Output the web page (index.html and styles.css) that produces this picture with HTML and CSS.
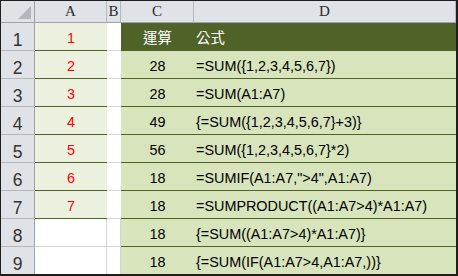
FILE: index.html
```html
<!DOCTYPE html>
<html>
<head>
<meta charset="utf-8">
<link rel="stylesheet" href="styles.css">
</head>
<body>
<div class="sheet">
  <div class="ch corner"><span class="tri"></span></div>
  <div class="ch">A</div>
  <div class="ch">B</div>
  <div class="ch">C</div>
  <div class="ch last">D</div>

  <div class="rh">1</div>
  <div class="a">1</div>
  <div class="b"></div>
  <div class="c head">運算</div>
  <div class="d head">公式</div>

  <div class="rh">2</div>
  <div class="a">2</div>
  <div class="b"></div>
  <div class="c">28</div>
  <div class="d">=SUM({1,2,3,4,5,6,7})</div>

  <div class="rh">3</div>
  <div class="a">3</div>
  <div class="b"></div>
  <div class="c">28</div>
  <div class="d">=SUM(A1:A7)</div>

  <div class="rh">4</div>
  <div class="a">4</div>
  <div class="b"></div>
  <div class="c">49</div>
  <div class="d">{=SUM({1,2,3,4,5,6,7}+3)}</div>

  <div class="rh">5</div>
  <div class="a">5</div>
  <div class="b"></div>
  <div class="c">56</div>
  <div class="d">=SUM({1,2,3,4,5,6,7}*2)</div>

  <div class="rh">6</div>
  <div class="a">6</div>
  <div class="b"></div>
  <div class="c">18</div>
  <div class="d">=SUMIF(A1:A7,"&gt;4",A1:A7)</div>

  <div class="rh">7</div>
  <div class="a">7</div>
  <div class="b"></div>
  <div class="c">18</div>
  <div class="d">=SUMPRODUCT((A1:A7&gt;4)*A1:A7)</div>

  <div class="rh">8</div>
  <div class="a blank"></div>
  <div class="b blank"></div>
  <div class="c">18</div>
  <div class="d">{=SUM((A1:A7&gt;4)*A1:A7)}</div>

  <div class="rh last">9</div>
  <div class="a blank last"></div>
  <div class="b blank last"></div>
  <div class="c last">18</div>
  <div class="d last">{=SUM(IF(A1:A7&gt;4,A1:A7,))}</div>
</div>
</body>
</html>
```

FILE: styles.css
```css
* { box-sizing: border-box; }
html, body { margin: 0; padding: 0; background: #ffffff; }

.sheet {
  width: 458px;
  height: 276px;
  border-top: 1px solid #1e1e1e;
  border-left: 1px solid #1e1e1e;
  border-right: 2px solid #1e1e1e;
  border-bottom: 2px solid #1e1e1e;
  display: grid;
  grid-template-columns: 34px 72px 14px 73px 262px;
  grid-template-rows: 22px repeat(8, 28px) 27px;
  font-family: "Liberation Sans", Arial, "Noto Sans CJK TC", sans-serif;
  font-size: 14.4px;
  color: #000;
}

.sheet > div {
  overflow: hidden;
  white-space: nowrap;
}

/* column headers */
.ch {
  background: #dfe3e8;
  border-right: 1px solid #b4b7bc;
  border-bottom: 1px solid #9ea2a8;
  font-family: "Liberation Serif", "Times New Roman", serif;
  font-size: 15px;
  color: #2a2a2a;
  text-align: center;
  line-height: 21px;
}
.ch.corner {
  position: relative;
  border-right-color: #9ea2a8;
}
.ch.last { border-right: 1px solid #b4b7bc; }
.tri {
  position: absolute;
  right: 3px;
  bottom: 3px;
  width: 0;
  height: 0;
  border-left: 13px solid transparent;
  border-bottom: 13px solid #b3b7bd;
}

/* row headers */
.rh {
  background: #dfe3e8;
  border-right: 1px solid #9ea2a8;
  border-bottom: 1px solid #b4b7bc;
  font-size: 17.5px;
  color: #333;
  text-align: center;
  line-height: 20px;
  padding-top: 7px;
}
.rh.last { border-bottom: none; }

/* column A */
.a {
  background: #ebf1de;
  border-bottom: 1px solid #4f6228;
  color: #ff0000;
  text-align: center;
  line-height: 24px;
  padding-top: 3px;
}
.a.blank, .b.blank {
  background: #fff;
  border-bottom: 1px solid #d4d4d4;
  border-right: 1px solid #d4d4d4;
}
.a.blank.last, .b.blank.last { border-bottom: none; }

/* column B */
.b {
  background: #fff;
  border-bottom: 1px solid #d4d4d4;
}

/* columns C and D */
.c, .d {
  background: #d7e4bc;
  border-bottom: 1px solid #4f6228;
  line-height: 24px;
  padding-top: 3px;
}
.c { text-align: center; }
.d { padding-left: 2px; }
.c.last, .d.last { border-bottom: none; }

.head {
  background: #4f6228;
  color: #fff;
  font-family: "Liberation Sans", "Noto Sans CJK TC", sans-serif;
  font-size: 14.4px;
}
```
